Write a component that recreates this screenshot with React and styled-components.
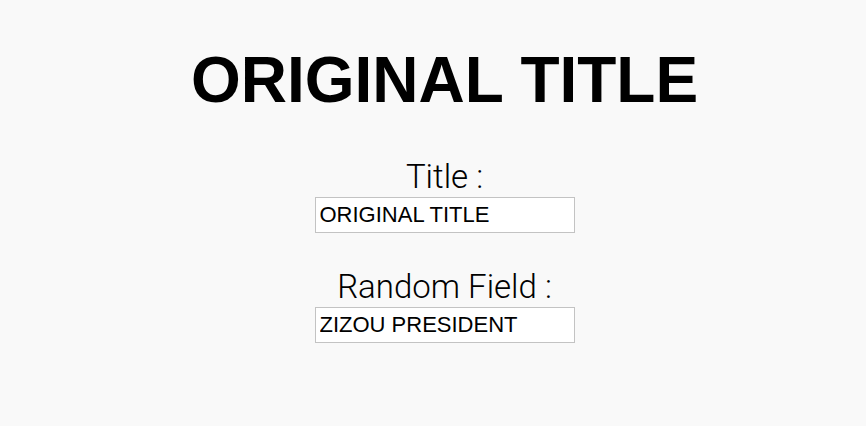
import React from 'react';
import styled, { createGlobalStyle } from 'styled-components';

const GlobalStyle = createGlobalStyle`
  html, body {
    margin: 0;
    padding: 0;
    background: #f9f9f9;
  }
  body {
    font-family: "Liberation Sans", Arial, sans-serif;
  }
`;

const Page = styled.div`
  display: flex;
  flex-direction: column;
  align-items: center;
  padding-top: 48px;
  padding-left: 23px;
`;

const Headline = styled.h1`
  font-size: 64px;
  font-weight: bold;
  line-height: 1;
  margin: 0 0 48px 0;
  color: #000;
`;

const Field = styled.div`
  display: flex;
  flex-direction: column;
  align-items: center;
  margin-bottom: 37px;
`;

const Label = styled.label`
  font-family: Roboto, "Liberation Sans", sans-serif;
  font-size: 33px;
  font-weight: 300;
  line-height: 1;
  color: #000;
  margin-bottom: 4px;
`;

const Input = styled.input`
  box-sizing: border-box;
  width: 260px;
  height: 36px;
  padding: 0 4px;
  border: 1px solid #c3c3c3;
  background: #fff;
  font-family: "Liberation Sans", Arial, sans-serif;
  font-size: 22px;
  color: #000;
  outline: none;
`;

const fields = [
  { id: 'title', label: 'Title :', value: 'ORIGINAL TITLE' },
  { id: 'random', label: 'Random Field :', value: 'ZIZOU PRESIDENT' },
];

function App() {
  return (
    <>
      <GlobalStyle />
      <Page>
        <Headline>ORIGINAL TITLE</Headline>
        {fields.map((field) => (
          <Field key={field.id}>
            <Label htmlFor={field.id}>{field.label}</Label>
            <Input id={field.id} defaultValue={field.value} />
          </Field>
        ))}
      </Page>
    </>
  );
}

export default App;
